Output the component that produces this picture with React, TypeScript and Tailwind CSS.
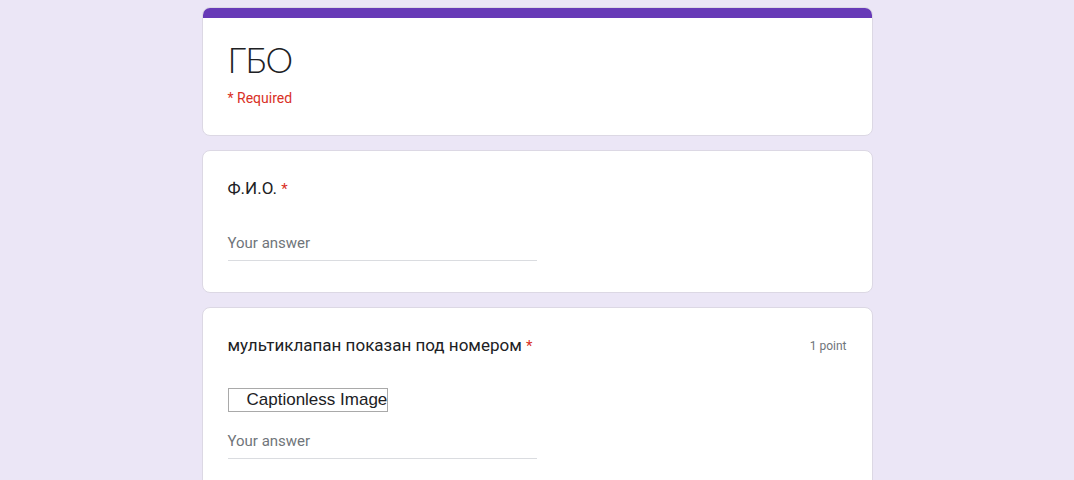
export default function App() {
  return (
    <div className="h-[480px] overflow-hidden w-full bg-[#ebe6f6] flex justify-center pt-[7px]" style={{ fontFamily: "Roboto, Arial, sans-serif" }}>
      <div className="w-[671px] flex flex-col gap-[14px]">
        {/* Title card */}
        <div className="shrink-0 rounded-lg bg-white border border-[#dcd8e4] overflow-hidden">
          <div className="h-[10px] bg-[#673ab7]" />
          <div className="pl-[25px] pt-[19px] pb-[27px]">
            <h1 className="text-[35px] leading-[44px] text-[#202124] font-['Lato',sans-serif] font-light tracking-[-1px]">ГБО</h1>
            <div className="mt-[7px] text-[14px] leading-[20px] text-[#d93025]">* Required</div>
          </div>
        </div>

        {/* Question 1 */}
        <div className="shrink-0 rounded-lg bg-white border border-[#dcd8e4] h-[143px] pl-[25px] pt-[25px]">
          <div className="text-[17px] leading-[24px] text-[#202124]">
            Ф.И.О. <span className="text-[#d93025] text-[15px]">*</span>
          </div>
          <div className="mt-[32px] w-[309px] border-b border-[#dadce0] pb-[7px] text-[15px] leading-[20px] text-[#70757a]">
            Your answer
          </div>
        </div>

        {/* Question 2 */}
        <div className="shrink-0 rounded-lg bg-white border border-[#dcd8e4] h-[200px] pl-[25px] pr-[25px] pt-[25px]">
          <div className="flex items-center justify-between">
            <div className="text-[17px] leading-[24px] text-[#202124]">
              мультиклапан показан под номером <span className="text-[#d93025] text-[15px]">*</span>
            </div>
            <div className="text-[12px] leading-[16px] text-[#70757a]">1 point</div>
          </div>
          <div className="mt-[30px] w-[160px] h-[24px] border border-[#a9a9a9] pl-[18px] text-[17px] leading-[22px] text-[#202124] font-['Liberation_Sans',sans-serif] whitespace-nowrap">
            Captionless Image
          </div>
          <div className="mt-[19px] w-[309px] border-b border-[#dadce0] pb-[7px] text-[15px] leading-[20px] text-[#70757a]">
            Your answer
          </div>
        </div>
      </div>
    </div>
  );
}
